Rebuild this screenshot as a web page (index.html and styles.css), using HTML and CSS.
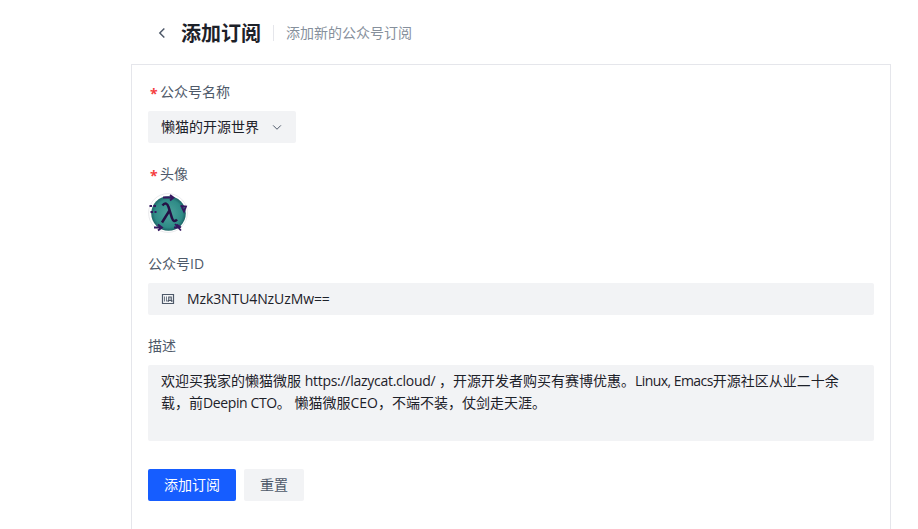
FILE: index.html
```html
<!DOCTYPE html>
<html lang="zh-CN">
<head>
  <meta charset="UTF-8" />
  <meta name="viewport" content="width=device-width, initial-scale=1.0"/>
  <title>添加订阅</title>
  <link rel="stylesheet" href="styles.css">
</head>
<body>

  <div class="page">
    <!-- Page header -->
    <header class="page-header">
      <svg class="back-icon" viewBox="0 0 48 48" width="14" height="14">
        <path d="M32 8.4 16.444 23.956 32 39.513" />
      </svg>
      <h1 class="title">添加订阅</h1>
      <span class="divider"></span>
      <span class="subtitle">添加新的公众号订阅</span>
    </header>

    <!-- Subscription form -->
    <form class="form-box">
      <div class="form-item">
        <label class="label required">公众号名称</label>
        <div class="select">
          <span>懒猫的开源世界</span>
          <svg class="arrow-icon" viewBox="0 0 48 48" width="12" height="12">
            <path d="M39.6 17.443 24.043 33 8.487 17.443" />
          </svg>
        </div>
      </div>

      <div class="form-item">
        <label class="label required">头像</label>
        <svg class="avatar" viewBox="0 0 40 40" width="40" height="40">
          <defs>
            <radialGradient id="teal" cx="0.5" cy="0.5" r="0.5">
              <stop offset="0" stop-color="#4da39c" />
              <stop offset="0.8" stop-color="#2f8b87" />
              <stop offset="1" stop-color="#1c6465" />
            </radialGradient>
          </defs>
          <circle cx="20" cy="20" r="19.4" fill="#fff" stroke="#e6e6ea" stroke-width="0.8" />
          <circle cx="20.5" cy="20.5" r="17.3" fill="url(#teal)" />
          <g class="avatar-marks">
            <path d="M15 4.500h9M22 2l3.500 2.500-3.500 3" />
            <path d="M1.500 13h2.500M5.500 13h2.500M2.500 19h2.500M6.500 19h2" />
            <path d="M32.500 13l5.500 .5-2 5-2.500-5" />
            <path d="M6 34.500h7M10 31.500l4 3-4 3" />
            <path d="M26 34.500h6M27 31l6 6.500M28.500 31.500l4.500 3" />
          </g>
          <path class="lambda" d="M14.500 12.500c2.500-3.500 5-2 6 1.500l3.500 11c1 3.500 3 4 5 1.500M21.500 17.500 14 29.500" />
        </svg>
      </div>

      <div class="form-item">
        <label class="label" for="accountId">公众号ID</label>
        <div class="input-box">
          <svg class="id-icon" viewBox="0 0 14 14" width="14" height="14">
            <path d="M1.500 2.500h11v9h-11z" />
            <path class="thin" d="M3.500 4.500v5M5.500 4.500v5" />
            <path d="M7.200 10V8.500h3.600V10M7.800 8V5h2.400v3" />
          </svg>
          <input type="text" id="accountId" value="Mzk3NTU4NzUzMw==">
        </div>
      </div>

      <div class="form-item">
        <label class="label">描述</label>
        <div class="textarea">欢迎买我家的懒猫微服 <span class="url">https://lazycat.cloud/</span> ，开源开发者购买有赛博优惠。<span class="names">Linux, Emacs</span>开源社区从业二十余载，前<span class="job">Deepin CTO</span>。 懒猫微服CEO，不端不装，仗剑走天涯。</div>
      </div>

      <div class="actions">
        <button type="submit" class="btn btn-primary">添加订阅</button>
        <button type="reset" class="btn">重置</button>
      </div>
    </form>
  </div>

</body>
</html>
```

FILE: styles.css
```css
* {
  box-sizing: border-box;
}

/* Page base styles */
body {
  margin: 0;
  background: #fff;
  color: #1d2129;
  font-family: "Open Sans", "Noto Sans CJK SC", sans-serif;
  font-size: 14px;
  line-height: 22px;
}

.page {
  width: 760px;
  margin-left: 131px;
}

/* Header */
.page-header {
  display: flex;
  align-items: center;
  height: 64px;
  padding: 2px 0 0 24px;
}

.back-icon,
.arrow-icon {
  fill: none;
  stroke: #4e5969;
  stroke-width: 4;
}

.back-icon {
  stroke-width: 5;
}

.title {
  margin: 0 0 0 12px;
  padding-top: 1px;
  font-size: 20px;
  font-weight: 600;
  line-height: 28px;
}

.divider {
  width: 1px;
  height: 16px;
  margin: 0 12px;
  background: #e5e6eb;
}

.subtitle {
  color: #86909c;
}

/* Form container box */
.form-box {
  height: 465px;
  padding: 16px;
  border: 1px solid #e5e6eb;
  border-bottom: none;
}

.form-item {
  margin-bottom: 20px;
}

.label {
  display: block;
  height: 22px;
  margin-bottom: 8px;
  color: #4e5969;
}

.required::before {
  content: "*";
  display: inline-block;
  width: 10px;
  margin-left: 2px;
  color: #f53f3f;
  font-size: 14px;
  font-weight: 700;
  line-height: 16px;
  vertical-align: -2px;
}

.select {
  display: flex;
  align-items: center;
  justify-content: space-between;
  width: 148px;
  height: 32px;
  padding: 0 13px;
  border-radius: 2px;
  background: #f2f3f5;
}

.avatar {
  display: block;
}

.avatar-marks {
  fill: none;
  stroke: #35175f;
  stroke-width: 1.8;
}

.lambda {
  fill: none;
  stroke: #241145;
  stroke-width: 2.5;
}

/* Text fields */
.input-box {
  display: flex;
  align-items: center;
  height: 32px;
  padding: 0 13px;
  border-radius: 2px;
  background: #f2f3f5;
}

.id-icon {
  flex: none;
  fill: none;
  stroke: #4e5969;
  stroke-width: 1.2;
}

.id-icon .thin {
  stroke-width: 0.8;
}

.input-box input {
  flex: 1;
  margin-left: 12px;
  padding: 0;
  border: none;
  background: none;
  color: inherit;
  font: inherit;
  letter-spacing: -0.1px;
}

.textarea {
  height: 76px;
  padding: 5px 13px;
  border-radius: 2px;
  background: #f2f3f5;
}

.url {
  letter-spacing: -0.27px;
}

.names {
  letter-spacing: -0.57px;
}

.job {
  letter-spacing: -0.38px;
}

/* Buttons */
.actions {
  display: flex;
  gap: 8px;
  padding-top: 8px;
}

.btn {
  height: 32px;
  padding: 0 16px;
  border: none;
  border-radius: 2px;
  background: #f2f3f5;
  color: #4e5969;
  font: inherit;
}

.btn-primary {
  background: #165dff;
  color: #fff;
}
```
